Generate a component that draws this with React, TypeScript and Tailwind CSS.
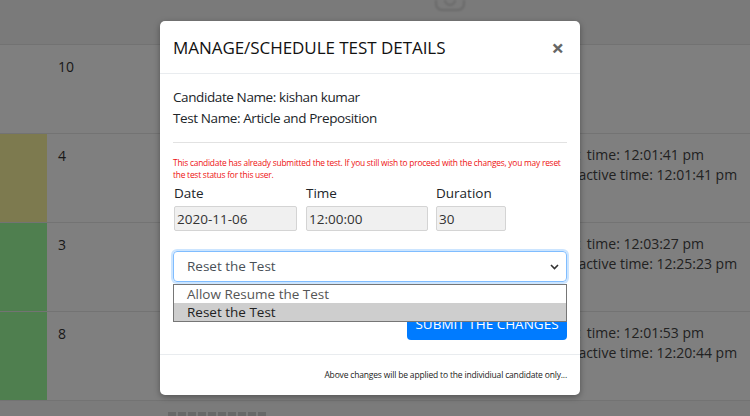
import React from 'react';

type Row = {
  id: number;
  tone: string;
  score: string;
  start?: string;
  active?: string;
};

const rows: Row[] = [
  { id: 1, tone: 'bg-white', score: '10' },
  { id: 2, tone: 'bg-[#fbf59e]', score: '4', start: '12:01:41 pm', active: '12:01:41 pm' },
  { id: 3, tone: 'bg-[#9eff9f]', score: '3', start: '12:03:27 pm', active: '12:25:23 pm' },
  { id: 4, tone: 'bg-[#9eff9f]', score: '8', start: '12:01:53 pm', active: '12:20:44 pm' },
];

const field = 'mt-[3px] h-[25px] bg-[#f0f0f0] border border-[#d4d4d4] rounded-[2px] px-[2px] text-[13.5px] text-[#333]';

const ScheduleModal: React.FC = () => (
  <div className="absolute left-[160px] top-[21px] w-[420px] h-[374px] rounded-[5px] bg-white shadow-[0_2px_6px_rgba(0,0,0,0.35)] flex flex-col text-[#212529]">
    <div className="h-[53px] flex items-center justify-between px-[13px] border-b border-[#e9ecef]">
      <h5 className="text-[17px] font-medium tracking-[-0.05px] pt-[1px] text-[#111]">MANAGE/SCHEDULE TEST DETAILS</h5>
      <button className="text-[22px] leading-none text-[#666] font-bold mr-[3px] -mt-[1px]">×</button>
    </div>

    <div className="px-[13px] pt-[13px] flex-1 relative">
      <p className="text-[13.5px] leading-[21px] tracking-[-0.4px]">Candidate Name: kishan kumar</p>
      <p className="text-[13.5px] leading-[21px] tracking-[-0.4px]">Test Name: Article and Preposition</p>
      <hr className="mt-[13px] border-[#e2e2e2]" />

      <p className="mt-[14px] text-[8.4px] leading-[12px] tracking-[-0.22px] text-[#ee1111]">
        This candidate has already submitted the test. If you still wish to proceed with the changes, you may reset the test status for this user.
      </p>

      <div className="flex gap-[9px] mt-[3px] pl-[1px]">
        <label className="flex flex-col w-[123px]">
          <span className="text-[13.5px] leading-[19px]">Date</span>
          <input readOnly value="2020-11-06" className={field} />
        </label>
        <label className="flex flex-col w-[122px]">
          <span className="text-[13.5px] leading-[19px]">Time</span>
          <input readOnly value="12:00:00" className={field} />
        </label>
        <label className="flex flex-col w-[70px] -ml-[1px]">
          <span className="text-[13.5px] leading-[19px]">Duration</span>
          <input readOnly value="30" className={field} />
        </label>
      </div>

      <div className="mt-[20px] h-[31px] border border-[#80bdff] rounded-[4px] shadow-[0_0_0_2px_rgba(0,123,255,0.2)] flex items-center justify-between pl-[13px] pr-[7px] text-[13.5px] text-[#495057]">
        <span>Reset the Test</span>
        <svg width="9" height="6" viewBox="0 0 9 6" className="text-[#333]">
          <path d="M1 1l3.5 3.5L8 1" fill="none" stroke="currentColor" strokeWidth="1.6" />
        </svg>
      </div>

      <div className="flex justify-end mt-[24px]">
        <button className="w-[160px] h-[34px] bg-[#007bff] rounded-[4px] text-white text-[13.5px] pt-[2px]">
          SUBMIT THE CHANGES
        </button>
      </div>

      {/* open native option list */}
      <div className="absolute left-[13px] top-[210px] w-[394px] border border-[#767676] bg-white text-[13.5px] leading-[18px]">
        <div className="pl-[13px] text-[#555]">Allow Resume the Test</div>
        <div className="pl-[13px] bg-[#cecece] text-[#222]">Reset the Test</div>
      </div>
    </div>

    <div className="h-[41px] border-t border-[#e9ecef] flex items-center justify-end px-[13px]">
      <span className="text-[8.5px] tracking-[-0.17px] text-[#222]">Above changes will be applied to the individiual candidate only...</span>
    </div>
  </div>
);

const App: React.FC = () => (
  <div className="relative w-[750px] h-[416px] overflow-hidden bg-white font-['Open_Sans',sans-serif] text-[#333]">
    <div className="h-[45px] bg-[#f5f5f5] border-b border-[#e4e4e4] flex justify-center">
      <svg width="34" height="12" viewBox="0 0 34 12" className="ml-[150px] opacity-25 blur-[1px]">
        <rect x="3" y="-10" width="28" height="20" rx="6" fill="none" stroke="#666" strokeWidth="2" />
        <circle cx="17" cy="0" r="5" fill="none" stroke="#666" strokeWidth="2" />
      </svg>
    </div>

    {rows.map((r) => (
      <div key={r.id} className="h-[89px] flex border-b border-[#e6e6e6]">
        <div className={`w-[47px] ${r.tone}`} />
        <div className="w-[502px] pl-[11px] pt-[12px] text-[14px] leading-[20px]">{r.score}</div>
        <div className="pt-[11px] text-[14px] leading-[20px] text-[#444] whitespace-nowrap">
          {r.start && (
            <p>
              <span className="mr-[3px]">Start</span> time: {r.start}
            </p>
          )}
          {r.active && <p className="-ml-[1px]">Last active time: {r.active}</p>}
        </div>
      </div>
    ))}

    <div className="h-[16px] bg-[#f7f7f7] flex gap-[2px] pl-[168px] pt-[11px]">
      {Array.from({ length: 10 }).map((_, i) => (
        <span key={i} className="w-[8px] h-[5px] bg-[#d0d0d0]" />
      ))}
    </div>

    <div className="absolute inset-0 bg-black/50" />
    <ScheduleModal />
  </div>
);

export default App;
